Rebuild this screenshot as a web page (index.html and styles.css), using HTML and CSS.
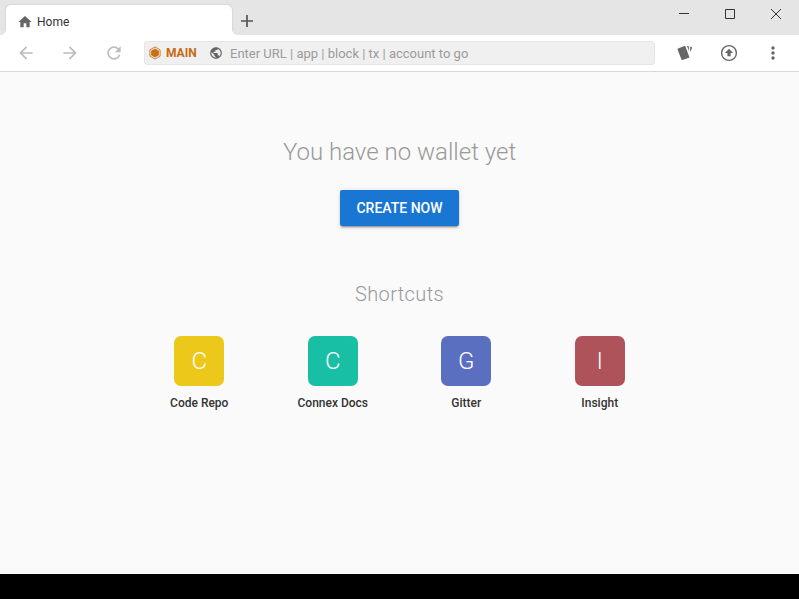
FILE: index.html
```html
<!DOCTYPE html>
<html lang="en">
<head>
<meta charset="utf-8">
<title>Home</title>
<link rel="stylesheet" href="styles.css">
</head>
<body>
<div class="window">
  <header class="titlebar">
    <div class="tab">
      <svg class="home-icon" viewBox="0 0 24 24"><path d="M10 20v-6h4v6h5v-8h3L12 3 2 12h3v8z"/></svg>
      <span>Home</span>
    </div>
    <button class="new-tab" aria-label="New tab"><svg viewBox="0 0 12 12"><path d="M6 0v12M0 6h12"/></svg></button>
    <div class="controls">
      <button aria-label="Minimize"><svg viewBox="0 0 10 10"><path d="M0 4.5h10"/></svg></button>
      <button aria-label="Maximize"><svg viewBox="0 0 10 10"><path d="M.5.5h9v9h-9z"/></svg></button>
      <button aria-label="Close"><svg viewBox="0 0 10 10"><path d="M0 0l10 10M10 0L0 10"/></svg></button>
    </div>
  </header>
  <nav class="toolbar">
    <button class="nav"><svg viewBox="0 0 24 24"><path d="M20 11H7.83l5.59-5.59L12 4l-8 8 8 8 1.41-1.41L7.83 13H20v-2z"/></svg></button>
    <button class="nav"><svg viewBox="0 0 24 24"><path d="M12 4l-1.41 1.41L16.17 11H4v2h12.17l-5.58 5.59L12 20l8-8z"/></svg></button>
    <button class="nav"><svg viewBox="0 0 24 24"><path d="M17.65 6.35C16.2 4.9 14.21 4 12 4c-4.42 0-7.99 3.58-7.99 8s3.57 8 7.99 8c3.73 0 6.84-2.55 7.73-6h-2.08c-.82 2.33-3.04 4-5.65 4-3.31 0-6-2.69-6-6s2.69-6 6-6c1.66 0 3.14.69 4.22 1.78L13 11h7V4l-2.35 2.35z"/></svg></button>
    <div class="address">
      <svg class="hex-icon" viewBox="0 0 12 14"><path class="hex-line" d="M6 .9l5.1 3v6.2L6 13.100l-5.100-3V3.900z"/><path d="M6 2.500l3.900 2.250v4.500L6 11.500 2.100 9.250v-4.500z"/></svg>
      <span class="network">MAIN</span>
      <svg class="globe-icon" viewBox="0 0 24 24"><path d="M12 2C6.480 2 2 6.480 2 12s4.480 10 10 10 10-4.480 10-10S17.520 2 12 2zm-1 17.930c-3.950-.49-7-3.850-7-7.930 0-.62.080-1.210.21-1.790L9 15v1c0 1.100.9 2 2 2v1.930zm6.900-2.540c-.26-.81-1-1.390-1.900-1.390h-1v-3c0-.55-.45-1-1-1H8v-2h2c.55 0 1-.45 1-1V7h2c1.100 0 2-.9 2-2v-.41c2.930 1.190 5 4.060 5 7.410 0 2.080-.8 3.970-2.100 5.390z"/></svg>
      <span class="placeholder">Enter URL | app | block | tx | account to go</span>
    </div>
    <div class="actions">
      <button><svg class="cards" viewBox="0 0 16 16"><path d="M1.300 4.200L7.700 1.700 11.500 12 5.200 14.300z" stroke-linejoin="round" stroke-width="1.600" stroke="#666"/><path d="M10 1h.9q1 0 1 1v4zM13.200 1.500l1.300.6q.8.4.5 1.200l-1.800 4z"/></svg></button>
      <button><svg class="upload" viewBox="0 0 18 18"><circle cx="9" cy="9" r="7.400"/><path d="M9 4.800L4.900 9h2.500v3.200h3.200V9h2.500z"/></svg></button>
      <button><svg class="more" viewBox="0 0 4 14"><circle cx="2" cy="2" r="1.700"/><circle cx="2" cy="7" r="1.700"/><circle cx="2" cy="12" r="1.700"/></svg></button>
    </div>
  </nav>
  <main>
    <h1>You have no wallet yet</h1>
    <button class="create">CREATE NOW</button>
    <h2>Shortcuts</h2>
    <div class="shortcuts">
      <div class="shortcut"><span class="tile yellow">C</span><span>Code Repo</span></div>
      <div class="shortcut"><span class="tile teal">C</span><span>Connex Docs</span></div>
      <div class="shortcut"><span class="tile indigo">G</span><span>Gitter</span></div>
      <div class="shortcut"><span class="tile red">I</span><span>Insight</span></div>
    </div>
  </main>
</div>
</body>
</html>
```
FILE: styles.css
```css
* { box-sizing: border-box; }
body { margin: 0; background: #000; font-family: Roboto, sans-serif; color: #333; overflow: hidden; }
button { border: 0; padding: 0; background: none; font: inherit; display: flex; align-items: center; justify-content: center; }
svg { display: block; flex: none; fill: #666; }
.window { height: 574px; background: #fafafa; display: flex; flex-direction: column; }
.titlebar { height: 35px; flex: none; background: #e5e5e5; display: flex; padding-left: 6px; }
.tab { position: relative; width: 226px; height: 30px; margin-top: 5px; padding: 4px 0 0 11px; background: #fff; border-radius: 5px 5px 0 0; display: flex; align-items: center; gap: 4px; font-size: 12px; box-shadow: 0 0 2px rgba(0,0,0,.18); clip-path: inset(-3px -6px 0 -6px); }
.tab::before, .tab::after { content: ""; position: absolute; bottom: 0; width: 5px; height: 5px; }
.tab::before { left: -5px; background: radial-gradient(circle at 0 0, transparent 4.5px, #fff 5px); }
.tab::after { right: -5px; background: radial-gradient(circle at 100% 0, transparent 4.5px, #fff 5px); }
.home-icon { width: 16px; height: 16px; }
.new-tab { width: 30px; height: 42px; }
.new-tab svg { width: 12px; height: 12px; stroke: #555; stroke-width: 1.7; }
.controls { margin-left: auto; display: flex; height: 28px; }
.controls button { width: 46px; }
.controls svg { width: 10px; height: 10px; fill: none; stroke: #333; stroke-width: 1; overflow: visible; }
.toolbar { height: 37px; flex: none; background: #fff; border-bottom: 1px solid #d8d8d8; display: flex; align-items: center; padding-left: 4px; }
.nav { width: 44px; height: 37px; }
.nav svg { width: 20px; height: 20px; fill: #bdbdbd; }
.address { width: 511px; height: 24px; margin-left: 8px; background: #f0f0f0; border: 1px solid #e6e6e6; border-radius: 3px; display: flex; align-items: center; padding-left: 4px; font-size: 13px; }
.hex-icon { width: 12px; height: 14px; fill: #c96f16; }
.hex-line { fill: none; stroke: #c96f16; stroke-width: .9; }
.network { width: 43px; margin-left: 5px; color: #c66a12; font-weight: 700; font-size: 12px; }
.globe-icon { width: 14px; height: 14px; }
.placeholder { margin-left: 7px; color: #9b9b9b; }
.actions { margin-left: 8px; display: flex; }
.actions button { width: 44px; height: 37px; }
.cards { width: 16px; height: 16px; }
.upload { width: 18px; height: 18px; }
.upload circle { fill: none; stroke: #666; stroke-width: 1.4; }
.more { width: 4px; height: 14px; }
main { display: flex; flex-direction: column; align-items: center; padding-top: 64px; }
h1 { margin: 0; font-size: 24px; line-height: 32px; font-weight: 300; color: #999; }
.create { margin-top: 22px; width: 119px; height: 36px; border-radius: 2px; background: #1976d2; color: #fff; font-size: 14px; font-weight: 500; box-shadow: 0 3px 1px -2px rgba(0,0,0,.2), 0 2px 2px rgba(0,0,0,.14), 0 1px 5px rgba(0,0,0,.12); }
h2 { margin: 54px 0 0; font-size: 20px; line-height: 28px; font-weight: 300; letter-spacing: .4px; color: #999; }
.shortcuts { width: 534px; margin-top: 28px; display: grid; grid-template-columns: repeat(4, 1fr); }
.shortcut { display: flex; flex-direction: column; align-items: center; font-size: 12px; line-height: 18px; font-weight: 500; }
.tile { width: 50px; height: 50px; margin-bottom: 8px; border-radius: 7px; color: #fff; font-size: 24px; line-height: 50px; font-weight: 300; text-align: center; }
.yellow { background: #ebc81a; }
.teal { background: #19bfa5; }
.indigo { background: #5b6fc0; }
.red { background: #ae5359; }
```
